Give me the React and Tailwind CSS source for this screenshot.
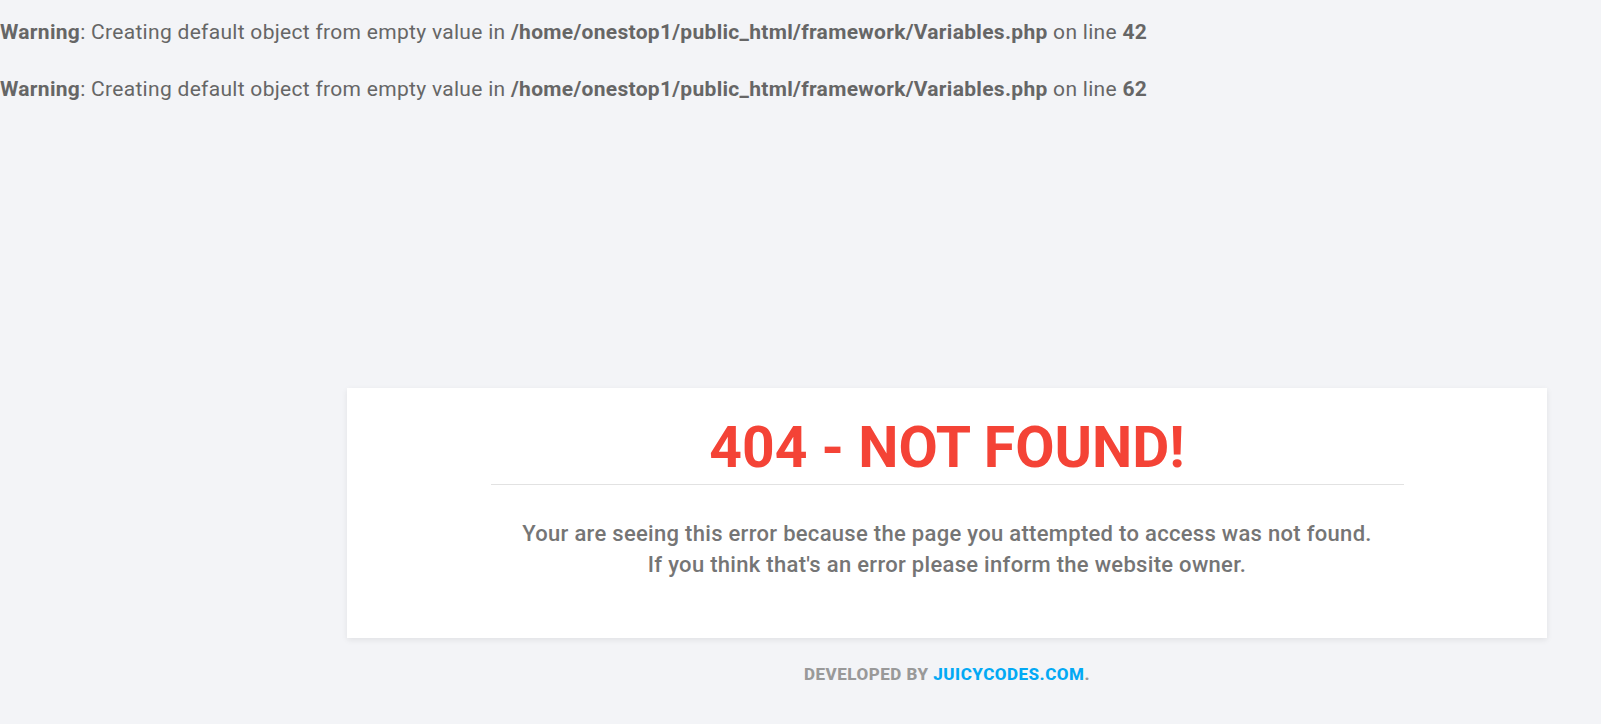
export default function App() {
  return (
    <div className="min-h-[724px] bg-[#f3f4f7] text-[#666] font-['Roboto',sans-serif]">
      {/* PHP warnings */}
      <div className="pt-[18px] text-[21px] leading-[28px] tracking-[0.3px] text-[#666]">
        <p>
          <b className="font-bold">Warning</b>: Creating default object from empty value in{" "}
          <b className="font-bold">/home/onestop1/public_html/framework/Variables.php</b> on line{" "}
          <b className="font-bold">42</b>
        </p>
        <p className="mt-[29px]">
          <b className="font-bold">Warning</b>: Creating default object from empty value in{" "}
          <b className="font-bold">/home/onestop1/public_html/framework/Variables.php</b> on line{" "}
          <b className="font-bold">62</b>
        </p>
      </div>

      {/* 404 card */}
      <div className="ml-[347px] mt-[285px] w-[1200px]">
        <div className="bg-white h-[250px] shadow-[0_2px_6px_rgba(0,0,0,0.08)] flex flex-col items-center pt-[25px]">
          <h1 className="text-[57px] leading-[70px] font-bold text-[#f44336]">404 - NOT FOUND!</h1>
          <div className="w-[913px] h-px bg-[#e2e2e2] mt-[1px]" />
          <p className="mt-[33px] text-center text-[22px] leading-[31px] tracking-[0.3px] font-medium text-[#757575]">
            Your are seeing this error because the page you attempted to access was not found.
            <br />
            If you think that's an error please inform the website owner.
          </p>
        </div>
        <p className="mt-[24px] text-center text-[17px] tracking-[0.5px] font-extrabold uppercase text-[#999]">
          Developed by <span className="text-[#03a9f4]">juicycodes.com</span>.
        </p>
      </div>
    </div>
  );
}
